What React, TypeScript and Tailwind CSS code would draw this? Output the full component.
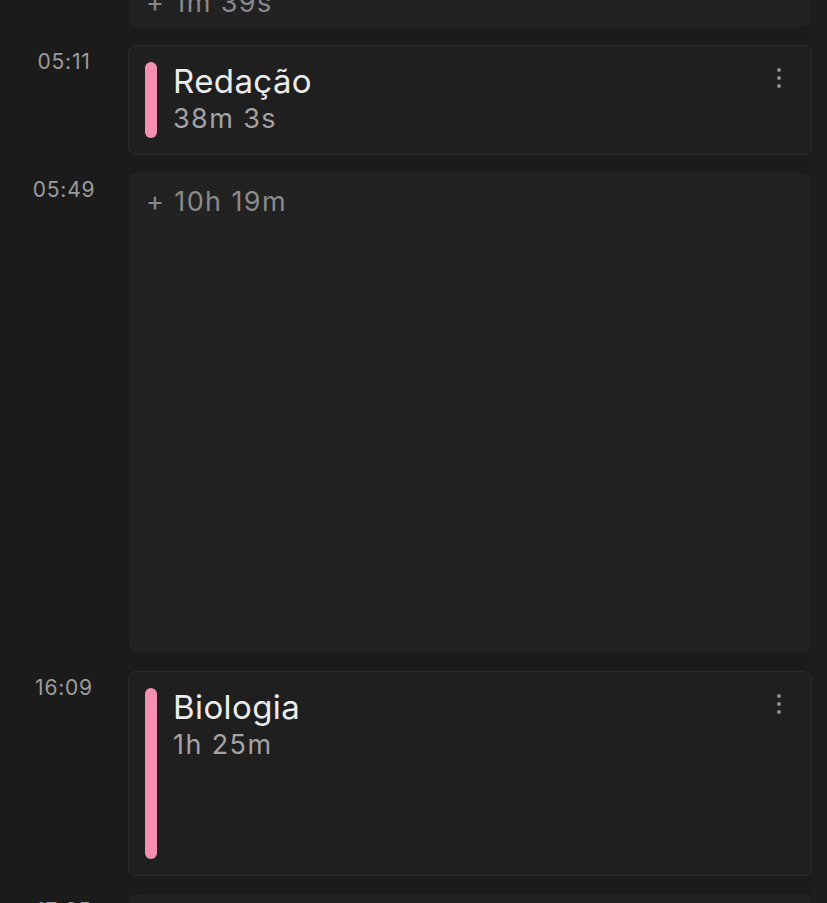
import React from "react";

type Item =
  | { kind: "gap"; time: string; label: string; height: number }
  | { kind: "event"; time: string; title: string; duration: string; bar: number };

const items: Item[] = [
  { kind: "gap", time: "", label: "+ 1m 39s", height: 53 },
  { kind: "event", time: "05:11", title: "Redação", duration: "38m 3s", bar: 76 },
  { kind: "gap", time: "05:49", label: "+ 10h 19m", height: 480 },
  { kind: "event", time: "16:09", title: "Biologia", duration: "1h 25m", bar: 171 },
  { kind: "gap", time: "17:35", label: "+ 2m 10s", height: 53 },
];

function Kebab() {
  return (
    <button className="shrink-0 self-start mr-[12px] mt-[4px] p-[2px]">
      <svg width="4" height="20" viewBox="0 0 4 20" fill="#8c8c8c" className="block">
        <circle cx="2" cy="2" r="2" />
        <circle cx="2" cy="10" r="2" />
        <circle cx="2" cy="18" r="2" />
      </svg>
    </button>
  );
}

function Row({ item, first }: { item: Item; first: boolean }) {
  return (
    <div className={`grid grid-cols-[128px_1fr] ${first ? "-mt-[26px]" : ""}`}>
      <div className="text-center text-[21px] leading-[34px] tracking-[0.8px] text-[#9c9c9c]">
        {item.time}
      </div>
      {item.kind === "gap" ? (
        <div
          className="mx-px rounded-lg bg-[#222222] px-[17px] pt-[13px]"
          style={{ height: item.height }}
        >
          <div className="text-[27px] leading-[32px] tracking-[1.4px] text-[#8a8a8a]">
            {item.label}
          </div>
        </div>
      ) : (
        <div className="flex items-start rounded-lg border border-[#2b2b2b] bg-[#1f1f1f] p-4">
          <div
            className="w-3 shrink-0 rounded-full bg-[#f48fb1]"
            style={{ height: item.bar }}
          />
          <div className="ml-4 flex-1">
            <div className="text-[33px] leading-[38px] tracking-[0.4px] text-[#ececec]">
              {item.title}
            </div>
            <div className="text-[27px] leading-[38px] tracking-[1.4px] text-[#a3a3a3]">
              {item.duration}
            </div>
          </div>
          <Kebab />
        </div>
      )}
    </div>
  );
}

export default function App() {
  return (
    <div
      className="flex h-[903px] overflow-hidden bg-[#1b1b1b]"
      style={{ fontFamily: "Inter, 'Noto Sans', sans-serif" }}
    >
      <div className="flex flex-1 flex-col gap-[18px]">
        {items.map((it, i) => (
          <Row key={i} item={it} first={i === 0} />
        ))}
      </div>
      <div className="w-[15px] shrink-0 bg-[#1d1d1d]" />
    </div>
  );
}
